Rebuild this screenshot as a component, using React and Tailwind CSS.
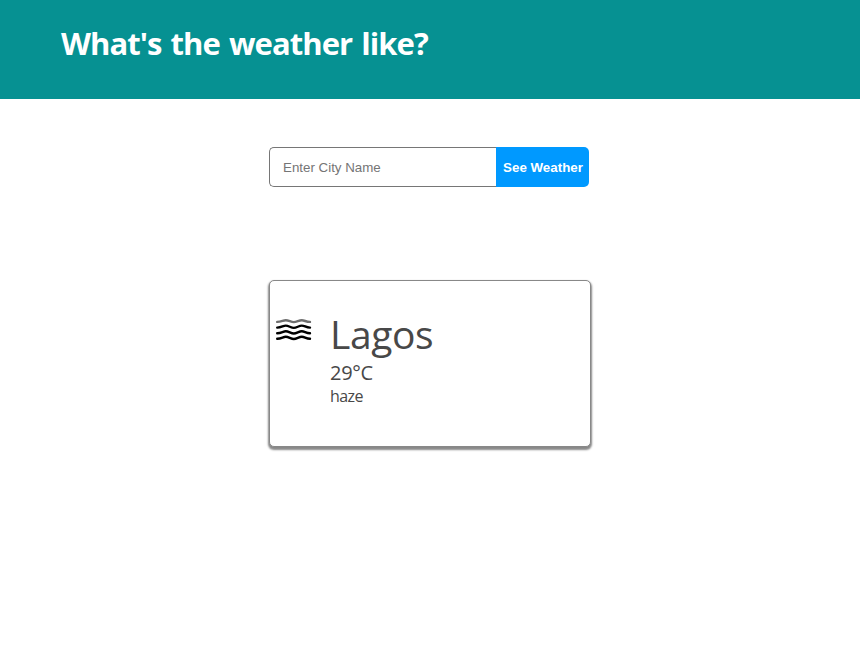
function HazeIcon() {
  return (
    <svg width="36" height="22" viewBox="0 0 36 22" fill="none" strokeWidth="2.4" strokeLinecap="round" strokeLinejoin="round" className="mt-[38px] block shrink-0">
      <path d="M1.2 2.9C5.5 2.9 7 1.3 9.8 1.3S15 3.1 17.8 3.1S23 1.3 25.8 1.3S30 2.9 34 2.9" stroke="#6f6f6f" />
      <path d="M1.2 8.6C5.5 8.6 7 6.6 9.8 6.6S15 8.9 17.8 8.9S23 6.6 25.8 6.6S30 8.6 34 8.6" stroke="#000" />
      <path d="M1.2 14.2C5.5 14.2 7 12.2 9.8 12.2S15 14.5 17.8 14.5S23 12.2 25.8 12.2S30 14.2 34 14.2" stroke="#000" />
      <path d="M1.2 19.7C5.5 19.7 7 17.7 9.8 17.7S15 20 17.8 20S23 17.7 25.8 17.7S30 19.7 34 19.7" stroke="#000" />
    </svg>
  );
}

export default function App() {
  return (
    <div className="min-h-screen bg-white font-['Open_Sans',sans-serif] text-[#484848]">
      <header className="h-[99px] bg-[#069192] pt-[22px] pl-[61px]">
        <h1 className="text-[31px] leading-[43px] font-bold tracking-[-0.95px] [word-spacing:2px] whitespace-nowrap text-white">What's the weather like?</h1>
      </header>
      <main className="flex flex-col pt-12 pl-[269px]">
        <form className="flex h-10 w-80 font-['Liberation_Sans',sans-serif] text-[13.333px]" onSubmit={(e) => e.preventDefault()}>
          <input
            type="text"
            placeholder="Enter City Name"
            className="w-[227px] rounded-l-[5px] border border-r-0 border-[#767676] bg-white pt-[2px] pl-[13px] outline-none placeholder:text-[#757575]"
          />
          <button className="w-[93px] rounded-r-[5px] bg-[#0099ff] pt-[2px] pl-px font-bold whitespace-nowrap text-white">See Weather</button>
        </form>
        <section className="mt-[93px] flex h-[167px] w-[322px] rounded-[5px] border border-[#888888] bg-white pl-[6px] shadow-[0_2px_2px_1px_#888888]">
          <HazeIcon />
          <div className="ml-[18px] pt-[26px]">
            <h2 className="text-[39px] leading-[53px] font-normal tracking-[-0.4px]">Lagos</h2>
            <p className="-mt-px text-[20px] leading-[27px] tracking-[-0.3px]">29°C</p>
            <p className="text-[16px] leading-[21px] tracking-[-0.6px]">haze</p>
          </div>
        </section>
      </main>
    </div>
  );
}
